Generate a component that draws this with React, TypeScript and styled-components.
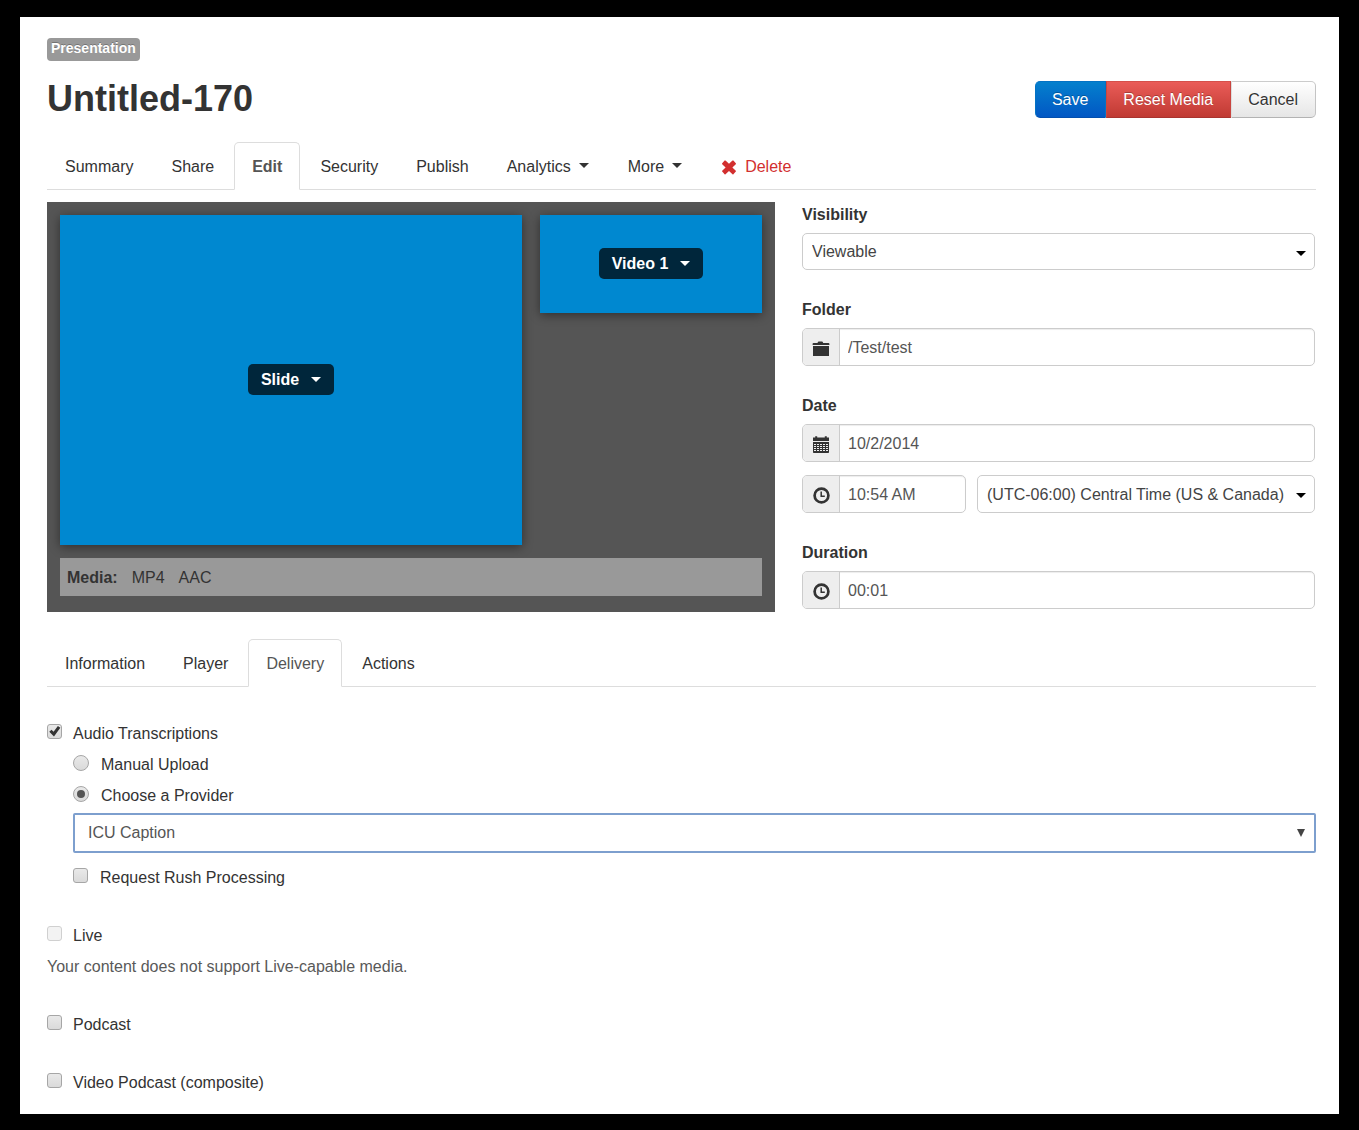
import React from "react";
import styled, { createGlobalStyle, css } from "styled-components";

const GlobalStyle = createGlobalStyle`
  *, *::before, *::after { box-sizing: border-box; }
  body {
    margin: 0;
    background: #000;
    color: #333;
    font: 16px/24px "Liberation Sans", Arial, Helvetica, sans-serif;
  }
  button, input, select { font: inherit; color: inherit; margin: 0; }
`;

const Sheet = styled.main`
  margin: 17px 20px 16px;
  padding: 21px 23px 16px 27px;
  background: #fff;
`;

const Badge = styled.span`
  display: block;
  width: fit-content;
  padding: 0 4px 2px;
  border-radius: 4px;
  background: #999;
  color: #fff;
  font-size: 14px;
  font-weight: bold;
  line-height: 21px;
  text-shadow: 0 -1px 0 rgba(0, 0, 0, 0.25);
`;

const Header = styled.header`
  display: flex;
  align-items: center;
  justify-content: space-between;
  margin: 20px 0 24px;
`;

const Title = styled.h1`
  margin: 0;
  padding-bottom: 1px;
  font-size: 36px;
  line-height: 36px;
`;

const ButtonGroup = styled.div`
  display: flex;
`;

const tones = {
  primary: css`
    background: linear-gradient(#0480cd, #0257c4);
    border-color: #0472c4 #0472c4 #034fae;
    color: #fff;
    text-shadow: 0 -1px 0 rgba(0, 0, 0, 0.25);
  `,
  danger: css`
    background: linear-gradient(#ea5c58, #c03a33);
    border-color: #d5504b #c9453f #a9342f;
    color: #fff;
    text-shadow: 0 -1px 0 rgba(0, 0, 0, 0.25);
  `,
  plain: css`
    background: linear-gradient(#fff, #e6e6e6);
    border-color: #ccc #c4c4c4 #b3b3b3;
    border-left-color: #ddd;
    text-shadow: 0 1px 0 rgba(255, 255, 255, 0.75);
  `,
};

const GroupButton = styled.button<{ $tone: keyof typeof tones }>`
  height: 37px;
  padding: 0 17px 0 16px;
  border: 1px solid;
  cursor: pointer;
  ${(p) => tones[p.$tone]}
  &:first-child { border-radius: 5px 0 0 5px; }
  &:last-child { border-radius: 0 5px 5px 0; }
`;

const TabList = styled.ul`
  display: flex;
  gap: 2px;
  margin: 0;
  padding: 0;
  list-style: none;
  border-bottom: 1px solid #ddd;
`;

const Tab = styled.a<{ $active?: boolean; $strong?: boolean; $danger?: boolean }>`
  display: flex;
  align-items: center;
  height: 48px;
  margin-bottom: -1px;
  padding: 2px 17px 0;
  border: 1px solid transparent;
  border-radius: 5px 5px 0 0;
  color: ${(p) => (p.$danger ? "#d22f2f" : p.$active ? "#555" : "#333")};
  font-weight: ${(p) => (p.$strong ? "bold" : "normal")};
  text-decoration: none;
  ${(p) => p.$active && css`
    background: #fff;
    border-color: #ddd #ddd #fff;
  `}
`;

const Caret = styled.span`
  width: 0;
  height: 0;
  margin-left: 7px;
  border: 5px solid transparent;
  border-top: 5px solid currentColor;
  border-bottom: 0;
`;

const TabCaret = styled(Caret)`
  margin: 0 1px 4px 8px;
`;

const RemoveIcon = styled.svg`
  width: 16px;
  height: 16px;
  margin-right: 8px;
  fill: currentColor;
`;

const Overview = styled.section`
  display: grid;
  grid-template-columns: minmax(0, 728fr) minmax(0, 513fr);
  gap: 27px;
  align-items: start;
  margin: 12px 1px 27px 0;
`;

const Preview = styled.div`
  padding: 13px 13px 16px;
  background: #555;
`;

const Stage = styled.div`
  display: grid;
  grid-template-columns: 462fr 222fr;
  gap: 18px;
  align-items: start;
`;

const Tile = styled.div<{ $ratio: string }>`
  display: flex;
  align-items: center;
  justify-content: center;
  aspect-ratio: ${(p) => p.$ratio};
  padding-bottom: 2px;
  background: #0088d0;
  box-shadow: 0 2px 10px rgba(0, 0, 0, 0.45);
`;

const TileButton = styled.button`
  display: flex;
  align-items: center;
  height: 31px;
  padding: 1px 13px 0;
  border: 0;
  border-radius: 5px;
  background: #00263b;
  color: #fff;
  font-weight: bold;
  cursor: pointer;
  ${Caret} { margin-left: 12px; }
`;

const MediaBar = styled.div`
  display: flex;
  align-items: center;
  gap: 14px;
  height: 38px;
  margin-top: 13px;
  padding: 2px 7px 0;
  background: #999;
`;

const Fields = styled.div`
  display: grid;
  gap: 27px;
`;

const Field = styled.div`
  display: grid;
`;

const FieldLabel = styled.label`
  padding-top: 1px;
  margin-bottom: 6px;
  font-weight: bold;
`;

const InputGroup = styled.div`
  display: flex;
  height: 38px;
  border: 1px solid #ccc;
  border-radius: 5px;
  box-shadow: inset 0 1px 1px rgba(0, 0, 0, 0.075);
  overflow: hidden;
`;

const AddOn = styled.span`
  display: flex;
  flex: none;
  align-items: center;
  justify-content: center;
  width: 37px;
  padding-top: 3px;
  border-right: 1px solid #ccc;
  background: #eee;
`;

const TextInput = styled.input`
  flex: 1;
  min-width: 0;
  padding: 2px 8px 0;
  border: 0;
  outline: 0;
  background: transparent;
  color: #555;
`;

const TimeRow = styled.div`
  display: grid;
  grid-template-columns: minmax(0, 164fr) minmax(0, 338fr);
  gap: 11px;
  margin-top: 13px;
`;

const SelectWrap = styled.div`
  position: relative;
  display: grid;
`;

const SelectBox = styled.select<{ $tall?: boolean }>`
  appearance: none;
  width: 100%;
  height: ${(p) => (p.$tall ? "38px" : "37px")};
  padding: 1px 24px 0 9px;
  border: 1px solid #ccc;
  border-radius: 5px;
  background: #fff;
  color: #444;
`;

const SelectCaret = styled(Caret)`
  position: absolute;
  right: 9px;
  top: 50%;
  margin: -1px 0 0;
  color: #000;
  pointer-events: none;
`;

const ProviderSelect = styled.select`
  appearance: none;
  width: 100%;
  height: 40px;
  padding: 0 24px 0 13px;
  border: 2px solid #7d9fce;
  border-radius: 2px;
  outline: 0;
  background: #fff;
  color: #555;
`;

const ProviderArrow = styled(Caret)`
  position: absolute;
  right: 11px;
  top: 16px;
  margin: 0;
  border-width: 8px 4px 0;
  color: #444;
  pointer-events: none;
`;

const Delivery = styled.section`
  display: grid;
  gap: 27px;
  padding-top: 31px;
`;

const OptionGroup = styled.div`
  display: grid;
`;

const Option = styled.label`
  display: flex;
  align-items: center;
  gap: 11px;
  width: fit-content;
  line-height: 31px;
`;

const Nested = styled.div`
  display: grid;
  padding-left: 26px;
  ${Option} { gap: 12px; }
`;

const ProviderRow = styled(SelectWrap)`
  margin: 2px 0 9px;
`;

const choice = css`
  appearance: none;
  display: grid;
  place-content: center;
  flex: none;
  margin-bottom: 4px;
  border: 1px solid #a6a6a6;
  background: linear-gradient(#e9e9e9, #dadada);
  &:disabled { border-color: #d0d0d0; background: #f3f3f3; }
`;

const Checkbox = styled.input.attrs({ type: "checkbox" })`
  ${choice}
  width: 15px;
  height: 15px;
  border-radius: 3px;
  &:checked::before {
    content: "";
    width: 13px;
    height: 13px;
    background: #333;
    clip-path: polygon(10% 52%, 27% 36%, 43% 52%, 76% 8%, 95% 22%, 46% 88%);
  }
`;

const Radio = styled.input.attrs({ type: "radio" })`
  ${choice}
  width: 16px;
  height: 16px;
  border-radius: 50%;
  &:checked::before {
    content: "";
    width: 8px;
    height: 8px;
    border-radius: 50%;
    background: #555;
  }
`;

const Hint = styled.p`
  margin: 0;
  color: #595959;
  line-height: 31px;
`;

const FolderIcon = () => (
  <svg width="18" height="16" viewBox="0 0 18 16" fill="#333" aria-hidden="true">
    <path d="M.6 4V2.8c0-.6.4-.9.9-.9h4C5.9 1 6.4.6 7.2.6h2.4c.8 0 1.2.3 1.6 1.3h5.3c.5 0 .9.3.9.9V4z" />
    <path d="M1 5h16v9.4c0 .4-.2.6-.6.6H1.6c-.4 0-.6-.2-.6-.6z" />
  </svg>
);

const CalendarIcon = () => (
  <svg width="16" height="17" viewBox="0 0 16 17" aria-hidden="true">
    <path fill="#333" d="M0 1.5h2.2V.3h2v1.2h7.6V.3h2v1.2H16V5H0zM0 6h16v10c0 .6-.4 1-1 1H1c-.6 0-1-.4-1-1z" />
    <path
      stroke="#eee"
      strokeWidth="1"
      strokeDasharray="2 1"
      d="M1 8.5h14M1 10.5h14M1 12.5h14M1 14.5h14"
    />
  </svg>
);

const ClockIcon = () => (
  <svg width="17" height="17" viewBox="0 0 17 17" fill="none" stroke="#333" aria-hidden="true">
    <circle cx="8.5" cy="8.5" r="6.9" strokeWidth="2.7" />
    <path d="M8.2 4.4V9.2H11.8" strokeWidth="1.5" />
  </svg>
);

export default function App() {
  return (
    <>
      <GlobalStyle />
      <Sheet>
        <Badge>Presentation</Badge>
        <Header>
          <Title>Untitled-170</Title>
          <ButtonGroup>
            <GroupButton type="button" $tone="primary">Save</GroupButton>
            <GroupButton type="button" $tone="danger">Reset Media</GroupButton>
            <GroupButton type="button" $tone="plain">Cancel</GroupButton>
          </ButtonGroup>
        </Header>

        <nav aria-label="Presentation">
          <TabList>
            <li><Tab href="#summary">Summary</Tab></li>
            <li><Tab href="#share">Share</Tab></li>
            <li><Tab href="#edit" $active $strong aria-current="page">Edit</Tab></li>
            <li><Tab href="#security">Security</Tab></li>
            <li><Tab href="#publish">Publish</Tab></li>
            <li><Tab href="#analytics">Analytics<TabCaret /></Tab></li>
            <li><Tab href="#more">More<TabCaret /></Tab></li>
            <li>
              <Tab href="#delete" $danger>
                <RemoveIcon viewBox="0 0 16 16" aria-hidden="true">
                  <path d="M1.2 4.3 3.6 1.6c.3-.3.6-.3.9 0L8 4.8l3.5-3.2c.3-.3.6-.3.9 0l2.4 2.7c.3.3.3.6 0 .9L11.4 8.4l3.4 3.3c.3.3.3.6 0 .9l-2.4 2.6c-.3.3-.6.3-.9 0L8 12l-3.5 3.2c-.3.3-.6.3-.9 0l-2.4-2.6c-.3-.3-.3-.6 0-.9l3.4-3.3-3.4-3.2c-.3-.3-.3-.6 0-.9z" />
                </RemoveIcon>
                Delete
              </Tab>
            </li>
          </TabList>
        </nav>

        <Overview>
          <Preview>
            <Stage>
              <Tile $ratio="462 / 330">
                <TileButton type="button">Slide<Caret /></TileButton>
              </Tile>
              <Tile $ratio="222 / 98">
                <TileButton type="button">Video 1<Caret /></TileButton>
              </Tile>
            </Stage>
            <MediaBar>
              <strong>Media:</strong>
              <span>MP4</span>
              <span>AAC</span>
            </MediaBar>
          </Preview>

          <Fields>
            <Field>
              <FieldLabel htmlFor="visibility">Visibility</FieldLabel>
              <SelectWrap>
                <SelectBox id="visibility" defaultValue="Viewable">
                  <option>Viewable</option>
                </SelectBox>
                <SelectCaret />
              </SelectWrap>
            </Field>
            <Field>
              <FieldLabel htmlFor="folder">Folder</FieldLabel>
              <InputGroup>
                <AddOn><FolderIcon /></AddOn>
                <TextInput id="folder" defaultValue="/Test/test" />
              </InputGroup>
            </Field>
            <Field>
              <FieldLabel htmlFor="date">Date</FieldLabel>
              <InputGroup>
                <AddOn><CalendarIcon /></AddOn>
                <TextInput id="date" defaultValue="10/2/2014" />
              </InputGroup>
              <TimeRow>
                <InputGroup>
                  <AddOn><ClockIcon /></AddOn>
                  <TextInput aria-label="Time" defaultValue="10:54 AM" />
                </InputGroup>
                <SelectWrap>
                  <SelectBox $tall aria-label="Time zone" defaultValue="central">
                    <option value="central">(UTC-06:00) Central Time (US &amp; Canada)</option>
                  </SelectBox>
                  <SelectCaret />
                </SelectWrap>
              </TimeRow>
            </Field>
            <Field>
              <FieldLabel htmlFor="duration">Duration</FieldLabel>
              <InputGroup>
                <AddOn><ClockIcon /></AddOn>
                <TextInput id="duration" defaultValue="00:01" />
              </InputGroup>
            </Field>
          </Fields>
        </Overview>

        <nav aria-label="Edit">
          <TabList>
            <li><Tab href="#information">Information</Tab></li>
            <li><Tab href="#player">Player</Tab></li>
            <li><Tab href="#delivery" $active aria-current="page">Delivery</Tab></li>
            <li><Tab href="#actions">Actions</Tab></li>
          </TabList>
        </nav>

        <Delivery>
          <OptionGroup>
            <Option><Checkbox defaultChecked />Audio Transcriptions</Option>
            <Nested>
              <Option><Radio name="source" />Manual Upload</Option>
              <Option><Radio name="source" defaultChecked />Choose a Provider</Option>
              <ProviderRow>
                <ProviderSelect aria-label="Provider" defaultValue="ICU Caption">
                  <option>ICU Caption</option>
                </ProviderSelect>
                <ProviderArrow />
              </ProviderRow>
              <Option><Checkbox />Request Rush Processing</Option>
            </Nested>
          </OptionGroup>
          <OptionGroup>
            <Option><Checkbox disabled />Live</Option>
            <Hint>Your content does not support Live-capable media.</Hint>
          </OptionGroup>
          <OptionGroup>
            <Option><Checkbox />Podcast</Option>
          </OptionGroup>
          <OptionGroup>
            <Option><Checkbox />Video Podcast (composite)</Option>
          </OptionGroup>
        </Delivery>
      </Sheet>
    </>
  );
}
